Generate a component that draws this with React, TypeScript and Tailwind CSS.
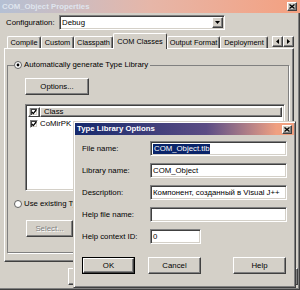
import type { ReactNode } from 'react'

const raised =
  'border border-t-white border-l-white border-r-[#404040] border-b-[#404040] shadow-[inset_-1px_-1px_0_#808080] bg-[#d4d0c8]'
const sunken =
  'border border-t-[#808080] border-l-[#808080] border-r-white border-b-white shadow-[inset_1px_1px_0_#404040,inset_-1px_-1px_0_#d4d0c8] bg-white'

function Radio({ checked }: { checked?: boolean }) {
  return (
    <svg width="8" height="8" viewBox="0 0 8 8" className="shrink-0">
      <circle cx="4" cy="4" r="3.5" fill="white" stroke="#606060" strokeWidth="1" />
      {checked && <circle cx="4" cy="4" r="1.4" fill="black" />}
    </svg>
  )
}

function Check() {
  return (
    <span className={`${sunken} flex h-[8px] w-[8px] shrink-0 items-center justify-center`}>
      <svg width="6" height="6" viewBox="0 0 6 6">
        <path d="M0.8 3 L2.3 4.6 L5.2 1" fill="none" stroke="black" strokeWidth="1.3" />
      </svg>
    </span>
  )
}

function CloseBox() {
  return (
    <span className={`${raised} flex h-[9px] w-[10px] items-center justify-center`}>
      <svg width="6" height="5" viewBox="0 0 6 5">
        <path d="M0.5 0.5 L5.5 4.5 M5.5 0.5 L0.5 4.5" stroke="black" strokeWidth="1.3" />
      </svg>
    </span>
  )
}

function Button({ children, w, disabled, isDefault }: { children: ReactNode; w: string; disabled?: boolean; isDefault?: boolean }) {
  const inner = (
    <span
      className={`${raised} flex h-full w-full items-center justify-center ${
        disabled ? 'text-[#808080] [text-shadow:1px_1px_0_white]' : 'text-black'
      }`}
    >
      {children}
    </span>
  )
  return isDefault ? (
    <span className={`flex h-[17px] ${w} border border-black`}>{inner}</span>
  ) : (
    <span className={`flex h-[17px] ${w}`}>{inner}</span>
  )
}

const tabs = [
  { label: 'Compile', w: 'w-[34px]' },
  { label: 'Custom', w: 'w-[33px]' },
  { label: 'Classpath', w: 'w-[39px]' },
  { label: 'COM Classes', w: 'w-[54px]', active: true },
  { label: 'Output Format', w: 'w-[53px]' },
  { label: 'Deployment', w: 'w-[48px]' },
]

function Field({ label, value, selected, w = 'w-[137px]' }: { label: string; value?: string; selected?: boolean; w?: string }) {
  return (
    <div className="flex h-[15px] items-center">
      <span className="w-[68px]">{label}</span>
      <span className={`${sunken} flex h-full ${w} items-center pl-[2px]`}>
        {value &&
          (selected ? (
            <span className="bg-[#0a246a] px-[1px] leading-[10px] text-white">{value}</span>
          ) : (
            <span className="whitespace-nowrap">{value}</span>
          ))}
      </span>
    </div>
  )
}

export default function App() {
  return (
    <div className="relative flex h-[290px] w-[300px] flex-col overflow-hidden bg-[#d4d0c8] font-['Liberation_Sans',Arial,sans-serif] text-[7.8px] text-black shadow-[inset_-1px_-1px_0_#404040,inset_-2px_-2px_0_#808080]">
      {/* outer title bar (inactive) */}
      <div className="flex h-[13px] shrink-0 items-center justify-between bg-linear-to-r from-[#b4c0d4] via-[#e6b6a8] to-[#f4a080] pr-[3px] pl-[2px]">
        <span className="font-bold text-[#dfe5ee]">COM_Object Properties</span>
        <CloseBox />
      </div>

      {/* configuration */}
      <div className="mt-[2px] flex h-[15px] shrink-0 items-center pl-[6px]">
        <span className="w-[53px]">Configuration:</span>
        <span className={`${sunken} flex h-full w-[166px] items-center justify-between pr-[1px] pl-[2px]`}>
          <span>Debug</span>
          <span className={`${raised} flex h-[11px] w-[11px] items-center justify-center`}>
            <svg width="5" height="3" viewBox="0 0 5 3">
              <path d="M0 0 H5 L2.5 3 Z" fill="black" />
            </svg>
          </span>
        </span>
      </div>

      {/* tabs */}
      <div className="relative z-10 mt-[3px] flex h-[15px] shrink-0 items-end pl-[7px] text-[7.4px]">
        {tabs.map((t) =>
          t.active ? (
            <span
              key={t.label}
              className={`-mb-[1px] flex h-[16px] ${t.w} items-start justify-center rounded-t-[2px] border border-b-0 border-t-white border-l-white border-r-[#404040] bg-[#d4d0c8] pt-[2px] whitespace-nowrap`}
            >
              {t.label}
            </span>
          ) : (
            <span
              key={t.label}
              className={`flex h-[12px] ${t.w} items-center justify-center rounded-t-[2px] border border-b-0 border-t-white border-l-white border-r-[#404040] whitespace-nowrap shadow-[inset_-1px_0_0_#808080]`}
            >
              {t.label}
            </span>
          ),
        )}
        <span className="mb-[1px] ml-[4px] flex">
          <span className={`${raised} flex h-[11px] w-[11px] items-center justify-center`}>
            <svg width="3" height="5" viewBox="0 0 3 5">
              <path d="M3 0 V5 L0 2.5 Z" fill="black" />
            </svg>
          </span>
          <span className={`${raised} flex h-[11px] w-[11px] items-center justify-center`}>
            <svg width="3" height="5" viewBox="0 0 3 5">
              <path d="M0 0 V5 L3 2.5 Z" fill="black" />
            </svg>
          </span>
        </span>
      </div>

      {/* tab panel */}
      <div className="ml-[4px] flex h-[214px] w-[290px] shrink-0 flex-col border border-t-white border-l-white border-r-[#404040] border-b-[#404040] pt-[11px] pr-[4px] pb-[9px] pl-[2px] shadow-[inset_-1px_-1px_0_#808080]">
        <fieldset className="flex flex-1 flex-col border border-[#808080] pb-[15px] shadow-[1px_1px_0_white]">
          <legend className="ml-[6px] flex h-[10px] items-center gap-[1px] pr-[2px]">
            <Radio checked />
            <span className="ml-[1px]">Automatically generate Type Library</span>
          </legend>
          <div className="mt-[8px] ml-[17px]">
            <Button w="w-[64px]">Options...</Button>
          </div>
          <div className={`${sunken} mt-[9px] ml-[17px] flex h-[87px] w-[260px] flex-col p-[2px]`}>
            <div className="flex h-[10px] shrink-0 bg-[#d4d0c8]">
              <span className={`${raised} flex w-[12px] items-center justify-center`}>
                <Check />
              </span>
              <span className={`${raised} flex flex-1 items-center pl-[3px]`}>Class</span>
            </div>
            <div className="mt-[2px] flex h-[10px] items-center gap-[2px] pl-[2px]">
              <Check />
              <span className="text-black">CoMirPK</span>
            </div>
          </div>
          <div className="mt-[8px] ml-[6px] flex h-[10px] items-center gap-[2px]">
            <Radio />
            <span>Use existing Type Library</span>
          </div>
          <div className="mt-[11px] ml-[18px]">
            <Button w="w-[47px]" disabled>
              Select...
            </Button>
          </div>
        </fieldset>
      </div>

      {/* outer buttons */}
      <div className="mt-[6px] flex shrink-0 gap-[6px] pl-[68px]">
        <Button w="w-[53px]">OK</Button>
        <Button w="w-[53px]">Cancel</Button>
        <Button w="w-[53px]">Apply</Button>
        <Button w="w-[53px]">Help</Button>
      </div>

      {/* Type Library Options dialog */}
      <div className="absolute top-[121px] left-[73px] flex h-[167px] w-[223px] flex-col border border-t-[#d4d0c8] border-l-[#d4d0c8] border-r-[#404040] border-b-[#404040] bg-[#d4d0c8] p-[1px] shadow-[inset_1px_1px_0_white,inset_-1px_-1px_0_#808080]">
        <div className="flex h-[12px] shrink-0 items-center justify-between bg-linear-to-r from-[#14286c] via-[#5c4c84] via-60% to-[#f0a080] to-92% pr-[2px] pl-[2px]">
          <span className="font-bold text-white">Type Library Options</span>
          <CloseBox />
        </div>
        <div className="mt-[6px] flex flex-col gap-[7px] pl-[7px]">
          <Field label="File name:" value="COM_Object.tlb" selected />
          <Field label="Library name:" value="COM_Object" />
          <Field label="Description:" value="Компонент, созданный в Visual J++" />
          <Field label="Help file name:" />
          <Field label="Help context ID:" value="0" w="w-[51px]" />
        </div>
        <div className="mt-[13px] flex pl-[7px]">
          <Button w="w-[53px]" isDefault>
            OK
          </Button>
          <span className="ml-[13px]">
            <Button w="w-[53px]">Cancel</Button>
          </span>
          <span className="ml-[32px]">
            <Button w="w-[53px]">Help</Button>
          </span>
        </div>
      </div>
    </div>
  )
}
